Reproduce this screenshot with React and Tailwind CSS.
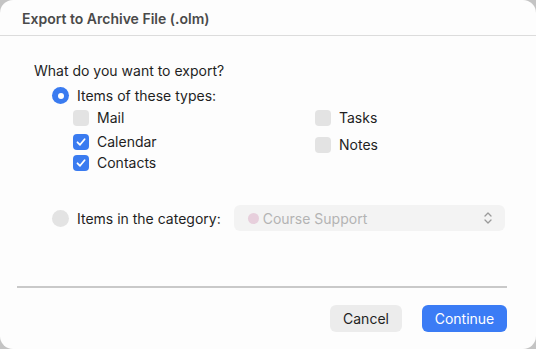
import React, { useState } from "react";

function Checkbox({ checked }) {
  return (
    <span
      className={
        "w-4 h-4 rounded-[4px] flex items-center justify-center shrink-0 " +
        (checked ? "bg-[#3a7bf0]" : "bg-[#e3e3e3]")
      }
    >
      {checked && (
        <svg width="12" height="12" viewBox="0 0 12 12">
          <path d="M2.5 6.3 L5 8.8 L9.6 3.2" fill="none" stroke="white" strokeWidth="1.8" strokeLinecap="round" strokeLinejoin="round" />
        </svg>
      )}
    </span>
  );
}

function Radio({ selected }) {
  return (
    <span
      className={
        "w-[17px] h-[17px] rounded-full flex items-center justify-center shrink-0 " +
        (selected ? "bg-[#3a7bf0]" : "bg-[#e3e3e3]")
      }
    >
      {selected && <span className="w-[6px] h-[6px] rounded-full bg-white" />}
    </span>
  );
}

function Option({ checked, label, className = "" }) {
  return (
    <div className={"flex items-center gap-2 " + className}>
      <Checkbox checked={checked} />
      <span>{label}</span>
    </div>
  );
}

export default function App() {
  const [types] = useState({ mail: false, calendar: true, contacts: true, tasks: false, notes: false });

  return (
    <div className="w-[536px] h-[349px] bg-[#c4c4c4] font-['Inter','Liberation_Sans',sans-serif] text-[14px] leading-[21px] text-[#1f1f1f]">
      <div className="w-full h-full bg-[#fdfdfd] rounded-[13px] flex flex-col overflow-hidden">
        {/* title bar */}
        <div className="h-[36px] border-b border-[#dcdcdc] flex items-center px-[22px] pt-[2px]">
          <span className="font-semibold text-[#4a4a4a]">Export to Archive File (.olm)</span>
        </div>

        <div className="flex flex-col pl-[34px] pt-[24px]">
          <div>What do you want to export?</div>

          <div className="flex items-center gap-[8px] pl-[18px] mt-[4px]">
            <Radio selected />
            <span>Items of these types:</span>
          </div>

          <div className="flex pl-[39px] mt-[1px]">
            <div className="flex flex-col w-[242px]">
              <Option checked={types.mail} label="Mail" />
              <Option checked={types.calendar} label="Calendar" className="mt-[3px]" />
              <Option checked={types.contacts} label="Contacts" />
            </div>
            <div className="flex flex-col">
              <Option checked={types.tasks} label="Tasks" />
              <Option checked={types.notes} label="Notes" className="mt-[6px]" />
            </div>
          </div>

          <div className="flex items-center pl-[18px] mt-[32px]">
            <Radio />
            <span className="ml-[8px]">Items in the category:</span>
            <div className="ml-[13px] w-[271px] h-[26px] rounded-[6px] bg-[#f3f3f3] flex items-center pl-[14px] pr-[12px]">
              <span className="w-[11px] h-[11px] rounded-full bg-[#e7cfdc]" />
              <span className="ml-[4px] text-[#b3b3b3]">Course Support</span>
              <svg className="ml-auto" width="10" height="14" viewBox="0 0 10 14">
                <path d="M2 5 L5 2 L8 5 M2 9 L5 12 L8 9" fill="none" stroke="#9a9a9a" strokeWidth="1.3" strokeLinecap="round" strokeLinejoin="round" />
              </svg>
            </div>
          </div>
        </div>

        <div className="ml-[17px] mr-[29px] mt-[55px] h-[2px] bg-[#c9c9c9]" />

        <div className="flex justify-end gap-[20px] pr-[29px] mt-[17px]">
          <button className="w-[72px] h-[27px] rounded-[6px] bg-[#ececec] text-[#1f1f1f]">Cancel</button>
          <button className="w-[85px] h-[27px] rounded-[6px] bg-[#3b7cf5] text-white">Continue</button>
        </div>
      </div>
    </div>
  );
}
